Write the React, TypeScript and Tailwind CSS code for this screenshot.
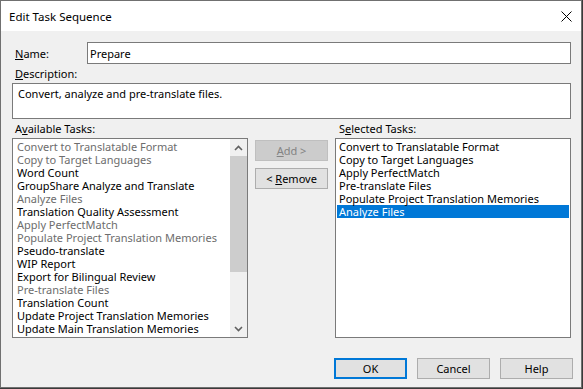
import React from 'react';

const availableTasks: [string, boolean][] = [
  ['Convert to Translatable Format', false],
  ['Copy to Target Languages', false],
  ['Word Count', true],
  ['GroupShare Analyze and Translate', true],
  ['Analyze Files', false],
  ['Translation Quality Assessment', true],
  ['Apply PerfectMatch', false],
  ['Populate Project Translation Memories', false],
  ['Pseudo-translate', true],
  ['WIP Report', true],
  ['Export for Bilingual Review', true],
  ['Pre-translate Files', false],
  ['Translation Count', true],
  ['Update Project Translation Memories', true],
  ['Update Main Translation Memories', true],
];

const selectedTasks = [
  'Convert to Translatable Format',
  'Copy to Target Languages',
  'Apply PerfectMatch',
  'Pre-translate Files',
  'Populate Project Translation Memories',
  'Analyze Files',
];

function Chevron({ up }: { up?: boolean }) {
  return (
    <svg width="9" height="6" viewBox="0 0 9 6">
      <polyline
        points={up ? '1,5 4.5,1.5 8,5' : '1,1 4.5,4.5 8,1'}
        fill="none"
        stroke="#606060"
        strokeWidth="1.6"
      />
    </svg>
  );
}

function DialogButton({
  children,
  disabled,
  isDefault,
}: {
  children: React.ReactNode;
  disabled?: boolean;
  isDefault?: boolean;
}) {
  const look = disabled
    ? 'bg-[#cccccc] border border-[#bfbfbf] text-[#838383]'
    : isDefault
      ? 'bg-[#e1e1e1] border-2 border-[#0078d7] text-black'
      : 'bg-[#e1e1e1] border border-[#adadad] text-black';
  return (
    <div className={`flex h-[21px] w-[73px] items-center justify-center ${look}`}>
      {children}
    </div>
  );
}

export default function App() {
  return (
    <div
      className="h-[389px] w-[583px] bg-[#3a3a3a] text-[11px] leading-[13px] text-black"
      style={{ fontFamily: '"Noto Sans", "Liberation Sans", sans-serif' }}
    >
      <div className="flex h-[388px] w-[582px] flex-col border border-[#707070] bg-[#f0f0f0]">
        {/* title bar */}
        <div className="flex h-[30px] items-center justify-between bg-white pl-[8px] pr-[9px]">
          <span className="text-[11.5px]">Edit Task Sequence</span>
          <svg width="11" height="11" viewBox="0 0 11 11">
            <path d="M0.5 0.5 L10.5 10.5 M10.5 0.5 L0.5 10.5" stroke="#000" strokeWidth="1" />
          </svg>
        </div>

        <div className="flex flex-1 flex-col pl-[11px] pr-[10px] pt-[11px]">
          {/* name */}
          <div className="flex h-[22px] items-center">
            <label className="w-[75px] pl-[3px]">
              <u>N</u>ame:
            </label>
            <div className="flex h-[22px] flex-1 items-center border border-[#7a7a7a] bg-white pl-[2px]">
              Prepare
            </div>
          </div>

          {/* description */}
          <div className="flex h-[19px] items-center pl-[3px]">
            <span>
              <u>D</u>escription:
            </span>
          </div>
          <div className="h-[36px] border border-[#7a7a7a] bg-white px-[5px] pt-[3px]">
            Convert, analyze and pre-translate files.
          </div>

          {/* list labels */}
          <div className="flex h-[19px] items-center">
            <span className="w-[323px] pl-[3px]">
              A<u>v</u>ailable Tasks:
            </span>
            <span className="pl-[4px]">
              S<u>e</u>lected Tasks:
            </span>
          </div>

          {/* lists */}
          <div className="flex h-[200px] gap-[7px]">
            <div className="flex w-[236px] border border-[#7a7a7a] bg-white">
              <div className="flex-1 pl-[4px] pt-[1px]">
                {availableTasks.map(([name, enabled]) => (
                  <div
                    key={name}
                    className={`h-[13px] whitespace-nowrap ${enabled ? 'text-black' : 'text-[#6d6d6d]'}`}
                  >
                    {name}
                  </div>
                ))}
              </div>
              <div className="flex w-[17px] flex-col bg-[#f0f0f0]">
                <div className="flex h-[17px] items-center justify-center">
                  <Chevron up />
                </div>
                <div className="flex-1">
                  <div className="h-[116px] bg-[#cdcdcd]" />
                </div>
                <div className="flex h-[17px] items-center justify-center">
                  <Chevron />
                </div>
              </div>
            </div>

            <div className="flex flex-col gap-[7px] pt-[2px]">
              <DialogButton disabled>
                <span>
                  <u>A</u>dd &gt;
                </span>
              </DialogButton>
              <DialogButton>
                <span>
                  &lt; <u>R</u>emove
                </span>
              </DialogButton>
            </div>

            <div className="w-[236px] border border-[#7a7a7a] bg-white p-[1px]">
              {selectedTasks.map((name, i) => (
                <div
                  key={name}
                  className={`h-[13px] whitespace-nowrap pl-[2px] ${
                    i === selectedTasks.length - 1 ? 'bg-[#0078d7] text-white' : ''
                  }`}
                >
                  {name}
                </div>
              ))}
            </div>
          </div>

          {/* dialog buttons */}
          <div className="-mr-[2px] mt-[20px] flex justify-end gap-[10px]">
            <DialogButton isDefault>OK</DialogButton>
            <DialogButton>Cancel</DialogButton>
            <DialogButton>Help</DialogButton>
          </div>
        </div>
      </div>
    </div>
  );
}
